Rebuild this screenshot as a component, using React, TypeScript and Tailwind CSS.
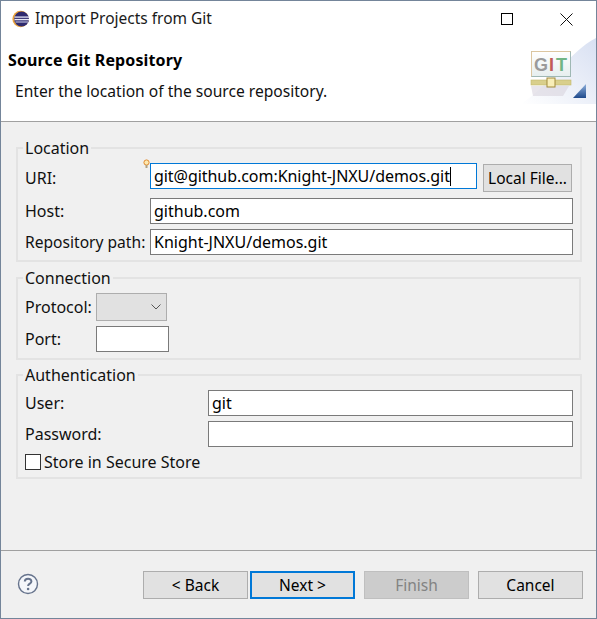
import React from "react";

const font = "font-['Noto_Sans','Open_Sans',sans-serif]";

function EclipseIcon() {
  return (
    <svg width="18" height="18" viewBox="0 0 18 18" className="shrink-0">
      <circle cx="8.6" cy="9" r="8.2" fill="#e8a23c" />
      <circle cx="9.6" cy="9" r="7.4" fill="#2f2a6e" />
      <rect x="2.5" y="6.4" width="14.5" height="1.4" fill="#d8d8ec" />
      <rect x="2.5" y="8.9" width="14.5" height="1.4" fill="#e8e8f4" />
      <rect x="3.5" y="11.4" width="12.5" height="1.2" fill="#b8b8d8" />
    </svg>
  );
}

function GitBanner() {
  return (
    <svg width="77" height="72" viewBox="0 0 77 72" className="absolute right-0 top-[35px]">
      <defs>
        <linearGradient id="swoosh" x1="0" y1="1" x2="1" y2="0">
          <stop offset="0" stopColor="#ffffff" />
          <stop offset="1" stopColor="#d8e0f2" />
        </linearGradient>
        <linearGradient id="board" x1="0" y1="0" x2="0" y2="1">
          <stop offset="0" stopColor="#ffffff" />
          <stop offset="1" stopColor="#e6eeee" />
        </linearGradient>
        <linearGradient id="corner" x1="0" y1="0" x2="0" y2="1">
          <stop offset="0" stopColor="#8fb0dc" />
          <stop offset="1" stopColor="#1f4a8c" />
        </linearGradient>
      </defs>
      <path d="M2 68 C30 50 50 16 77 2 L77 68 Z" fill="url(#swoosh)" />
      <path d="M12 50 H50 L44 60 H14 Z" fill="#d9d3de" opacity="0.6" />
      <rect x="12.5" y="15.5" width="39" height="25" fill="url(#board)" stroke="#9fb8b4" />
      <path d="M12.5 40.5 V15.5 H51.5" fill="none" stroke="#dcc6a0" />
      <text x="15" y="35" fontFamily="Liberation Sans" fontWeight="700" fontSize="18" fill="#9a9a9a">G</text>
      <text x="30" y="35" fontFamily="Liberation Sans" fontWeight="700" fontSize="18" fill="#c25a5a">I</text>
      <text x="37" y="35" fontFamily="Liberation Sans" fontWeight="700" fontSize="18" fill="#72b585">T</text>
      <rect x="12" y="44" width="40" height="5" fill="#d9cf8c" stroke="#c4b86c" strokeWidth="0.6" />
      <rect x="28" y="42" width="8" height="9" fill="#f8eeb8" stroke="#a08a3c" />
      <path d="M67 62 H54 L67 48 Z" fill="url(#corner)" />
    </svg>
  );
}

function HelpIcon() {
  return (
    <svg width="22" height="22" viewBox="0 0 22 22">
      <circle cx="11" cy="11" r="9.5" fill="#f4f6fa" stroke="#66738c" strokeWidth="1.4" />
      <path d="M7.8 8.6 C7.8 4.9 14.4 4.9 14.4 8.4 C14.4 10.6 11.1 10.7 11.1 13" fill="none" stroke="#66738c" strokeWidth="2" />
      <circle cx="11.1" cy="16" r="1.3" fill="#66738c" />
    </svg>
  );
}

function Field({ value, className }: { value?: string; className: string }) {
  return (
    <div className={`h-[26px] bg-white border border-[#7a7a7a] pl-[3px] flex items-center text-[16px] text-black overflow-hidden ${className}`}>
      {value}
    </div>
  );
}

function Group({ title, className, children }: { title: string; className: string; children: React.ReactNode }) {
  return (
    <fieldset className={`border-2 border-[#e3e3e3] mx-[15px] pl-[7px] pr-[7px] ${className}`}>
      <legend className="-ml-[2px] px-[2px] text-[16px] leading-[20px] text-[#111]">{title}</legend>
      {children}
    </fieldset>
  );
}

function Btn({ label, state }: { label: string; state?: "default" | "disabled" }) {
  const look =
    state === "default"
      ? "border-2 border-[#0078d7] bg-[#e1e1e1] text-black"
      : state === "disabled"
        ? "border border-[#bfbfbf] bg-[#cccccc] text-[#838383]"
        : "border border-[#adadad] bg-[#e1e1e1] text-black";
  return <div className={`w-[105px] h-[28px] pt-[1px] flex items-center justify-center text-[15.5px] ${look}`}>{label}</div>;
}

export default function App() {
  return (
    <div className={`w-[597px] h-[619px] flex flex-col border border-[#74859a] bg-[#f0f0f0] overflow-hidden ${font}`}>
      <div className="relative h-[121px] bg-white border-b border-[#a0a0a0] shrink-0">
        <div className="h-[36px] flex items-center pl-[11px] gap-[5px] text-[15.5px] text-[#1a1a1a]">
          <EclipseIcon />
          <span>Import Projects from Git</span>
          <div className="ml-auto flex items-center">
            <div className="w-[12px] h-[12px] border border-black mr-[47px]" />
            <svg width="13" height="13" viewBox="0 0 13 13" className="mr-[23px]">
              <path d="M0.5 0.5 L12.5 12.5 M12.5 0.5 L0.5 12.5" stroke="#111" strokeWidth="1" />
            </svg>
          </div>
        </div>
        <div className="pl-[7px] mt-[12px] text-[16px] leading-[22px] tracking-[0.12px] font-bold text-black">Source Git Repository</div>
        <div className="pl-[14px] mt-[10px] text-[15.6px] leading-[20px] text-[#111]">Enter the location of the source repository.</div>
        <GitBanner />
      </div>

      <div className="flex-1 text-[16px] leading-[24px] text-[#111] pt-[16px]">
        <Group title="Location" className="h-[124px]">
          <div className="flex items-start mt-[5px]">
            <span className="w-[125px] mt-[3px]">URI:</span>
            <div className="relative flex">
              <svg width="7" height="10" viewBox="0 0 7 10" className="absolute -left-[7px] -top-[4px]">
                <circle cx="3.5" cy="3.5" r="2.6" fill="#fde9b0" stroke="#e08a30" />
                <rect x="2.5" y="6" width="2" height="3" fill="#b0a080" />
              </svg>
              <div className="w-[327px] h-[26px] bg-white border border-[#0078d7] pl-[3px] flex items-center tracking-[-0.05px] text-black">
                git@github.com:Knight-JNXU/demos.git
                <span className="w-px h-[19px] bg-black" />
              </div>
              <div className="ml-[6px] mt-[1px] w-[89px] h-[28px] flex items-center justify-center bg-[#e1e1e1] border border-[#adadad] text-[15.5px] text-black">
                Local File...
              </div>
            </div>
          </div>
          <div className="flex items-center mt-[6px]">
            <span className="w-[125px]">Host:</span>
            <Field value="github.com" className="w-[423px]" />
          </div>
          <div className="flex items-center mt-[5px]">
            <span className="w-[125px] text-[15.6px]">Repository path:</span>
            <Field value="Knight-JNXU/demos.git" className="w-[423px]" />
          </div>
        </Group>

        <Group title="Connection" className="h-[92px] mt-[6px]">
          <div className="flex items-center mt-[5px]">
            <span className="w-[71px]">Protocol:</span>
            <div className="w-[71px] h-[28px] bg-[#e1e1e1] border border-[#adadad] flex items-center justify-end pr-[5px]">
              <svg width="10" height="6" viewBox="0 0 10 6">
                <path d="M0.5 0.5 L5 5 L9.5 0.5" fill="none" stroke="#555" />
              </svg>
            </div>
          </div>
          <div className="flex items-center mt-[5px]">
            <span className="w-[71px]">Port:</span>
            <Field className="w-[73px]" />
          </div>
        </Group>

        <Group title="Authentication" className="h-[114px] mt-[5px]">
          <div className="flex items-center mt-[5px]">
            <span className="w-[183px]">User:</span>
            <Field value="git" className="w-[365px]" />
          </div>
          <div className="flex items-center mt-[5px]">
            <span className="w-[183px]">Password:</span>
            <Field className="w-[365px]" />
          </div>
          <div className="flex items-center mt-[3px] gap-[3px]">
            <span className="w-[16px] h-[16px] bg-white border border-[#333]" />
            <span>Store in Secure Store</span>
          </div>
        </Group>
      </div>

      <div className="h-[68px] shrink-0 border-t border-[#a0a0a0] flex items-start pt-[20px] pl-[16px] pr-[13px]">
        <div className="mt-[2px]">
          <HelpIcon />
        </div>
        <div className="ml-auto flex">
          <Btn label="< Back" />
          <div className="ml-[2px]">
            <Btn label="Next >" state="default" />
          </div>
          <div className="ml-[9px]">
            <Btn label="Finish" state="disabled" />
          </div>
          <div className="ml-[9px]">
            <Btn label="Cancel" />
          </div>
        </div>
      </div>
    </div>
  );
}
